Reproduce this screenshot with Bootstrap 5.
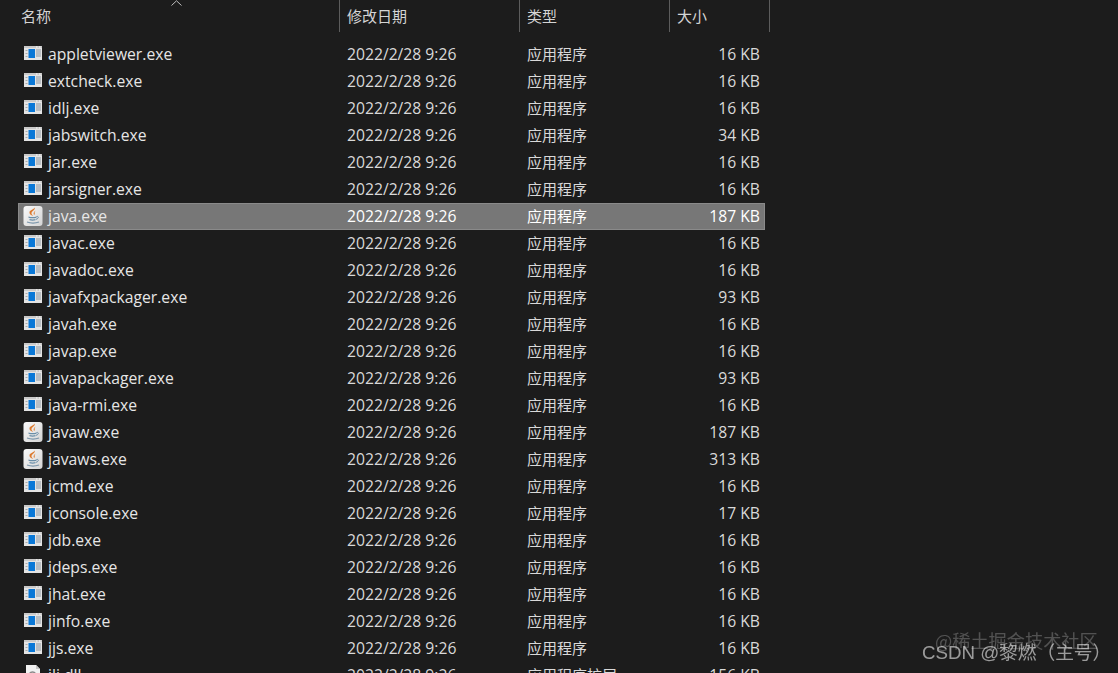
<!DOCTYPE html>
<html lang="zh">
<head>
<meta charset="utf-8">
<title>Explorer</title>
<link href="https://cdn.jsdelivr.net/npm/bootstrap@5.3.0/dist/css/bootstrap.min.css" rel="stylesheet">
<style>
html,body{height:673px;overflow:hidden;background:#1c1c1c;}
body{font-family:"Open Sans","Noto Sans CJK SC",sans-serif;font-size:15.7px;color:#d9d9d9;position:relative;}
.hdr{height:32px;width:770px;}
.hcell{height:32px;border-right:1px solid #5c5c5c;padding-left:7px;line-height:32px;font-size:15px;color:#d4d4d4;font-family:"Noto Sans CJK SC",sans-serif;position:relative;}
.c1{width:340px;flex:none;}
.c2{width:180px;flex:none;}
.c3{width:150px;flex:none;}
.c4{width:100px;flex:none;}
.hcell.c1{padding-left:21px;}
.chev{position:absolute;left:171px;top:0;}
.flist{padding:9px 0 0 18px;}
.frow{height:27px;width:747px;line-height:26px;white-space:nowrap;}
.frow.sel{background:#777;box-shadow:inset 0 0 0 1px #8a8a8a;color:#fff;}
.fname{width:322px;height:26px;flex:none;padding-left:5px;gap:5px;color:#e6e6e6;}
.fdate{width:180px;flex:none;padding-left:7px;}
.ftype{width:136px;flex:none;padding-left:7px;font-family:"Noto Sans CJK SC",sans-serif;font-size:15px;line-height:25px;}
.fsize{width:104px;flex:none;text-align:right;}
.ico{width:20px;height:20px;flex:none;display:block;}
.mark-a,.mark-b{position:absolute;white-space:nowrap;font-family:"Noto Sans CJK SC",sans-serif;filter:blur(.6px);}
.mark-a{left:935px;top:627px;font-size:18.2px;color:rgba(255,255,255,.24);}
.mark-b{left:922px;top:639px;font-size:18.7px;color:rgba(255,255,255,.56);font-family:"Liberation Sans","Noto Sans CJK SC",sans-serif;}
</style>
</head>
<body>
<svg width="0" height="0" class="position-absolute">
<defs>
<linearGradient id="javbg" x1="0" y1="0" x2="1" y2="1"><stop offset="0" stop-color="#fafafa"/><stop offset="1" stop-color="#d4d4d4"/></linearGradient>
<symbol id="exe" viewBox="0 0 20 20">
<rect x="1" y="2" width="18" height="14" fill="#e4e4e4"/>
<rect x="1" y="2" width="18" height="2" fill="#c9c9c9"/>
<rect x="13" y="2.500" width="1.500" height="1" fill="#fff"/><rect x="16" y="2.500" width="1.500" height="1" fill="#fff"/>
<rect x="5.500" y="5" width="6.500" height="9" fill="#0a78d7"/>
<rect x="2.500" y="6" width="2" height="1" fill="#a9a9a9"/><rect x="2.500" y="9" width="2" height="1" fill="#a9a9a9"/><rect x="2.500" y="12" width="2" height="1" fill="#a9a9a9"/>
<path d="M13 6h5M13 8h5M13 10h5M13 12h5" stroke="#8f99a3" stroke-width="1"/>
</symbol>
<symbol id="jav" viewBox="0 0 20 20">
<rect x=".5" y="0" width="19" height="20" rx="3" fill="url(#javbg)"/>
<path d="M11.500 1.500c1.500 2.500-3.500 3.500-3 6 .2 1 1 1.500 1.500 2.500-2-.7-4-2-3.500-4 .5-2 4.500-2.500 5-4.500z" fill="#dd7a2e"/>
<path d="M13 4.500c-2 1.200-3 2-2 4.500 1-.5.800-1.500.600-2.300-.1-.8.600-1.400 1.400-2.200z" fill="#dd7a2e"/>
<path d="M5.500 10.500c2 .7 6 .7 8 0v1.200c-2 .7-6 .7-8 0zM6.500 13c1.800.6 4.500.6 6 0v1.200c-1.500.6-4.500.6-6 0z" fill="#6a8ea8"/>
<path d="M13.500 10.500c2.500-.7 2.500 2.200-.5 2.800" stroke="#6a8ea8" fill="none"/>
<path d="M4 16c3.500 1.300 8.500 1.300 12 0" stroke="#7a95aa" stroke-width="1.200" fill="none"/>
</symbol>
<symbol id="dll" viewBox="0 0 20 20">
<path d="M3 0h10l4 4v16H3z" fill="#f2f2f2"/>
<path d="M13 0v4h4" fill="#c8c8c8"/>
<circle cx="9.500" cy="10" r="3" fill="none" stroke="#8a8a8a" stroke-width="1.500"/>
</symbol>
</defs>
</svg>

<div class="hdr d-flex">
  <div class="hcell c1">名称<svg class="chev" width="11" height="6" viewBox="0 0 11 6"><path d="M.5 5.500 5.500 .8l5 4.700" fill="none" stroke="#bdbdbd"/></svg></div>
  <div class="hcell c2">修改日期</div>
  <div class="hcell c3">类型</div>
  <div class="hcell c4">大小</div>
</div>

<div class="flist">
<div class="frow d-flex"><div class="fname d-flex align-items-center"><svg class="ico"><use href="#exe"/></svg><span>appletviewer.exe</span></div><div class="fdate">2022/2/28 9:26</div><div class="ftype">应用程序</div><div class="fsize">16 KB</div></div>
<div class="frow d-flex"><div class="fname d-flex align-items-center"><svg class="ico"><use href="#exe"/></svg><span>extcheck.exe</span></div><div class="fdate">2022/2/28 9:26</div><div class="ftype">应用程序</div><div class="fsize">16 KB</div></div>
<div class="frow d-flex"><div class="fname d-flex align-items-center"><svg class="ico"><use href="#exe"/></svg><span>idlj.exe</span></div><div class="fdate">2022/2/28 9:26</div><div class="ftype">应用程序</div><div class="fsize">16 KB</div></div>
<div class="frow d-flex"><div class="fname d-flex align-items-center"><svg class="ico"><use href="#exe"/></svg><span>jabswitch.exe</span></div><div class="fdate">2022/2/28 9:26</div><div class="ftype">应用程序</div><div class="fsize">34 KB</div></div>
<div class="frow d-flex"><div class="fname d-flex align-items-center"><svg class="ico"><use href="#exe"/></svg><span>jar.exe</span></div><div class="fdate">2022/2/28 9:26</div><div class="ftype">应用程序</div><div class="fsize">16 KB</div></div>
<div class="frow d-flex"><div class="fname d-flex align-items-center"><svg class="ico"><use href="#exe"/></svg><span>jarsigner.exe</span></div><div class="fdate">2022/2/28 9:26</div><div class="ftype">应用程序</div><div class="fsize">16 KB</div></div>
<div class="frow sel d-flex"><div class="fname d-flex align-items-center"><svg class="ico"><use href="#jav"/></svg><span>java.exe</span></div><div class="fdate">2022/2/28 9:26</div><div class="ftype">应用程序</div><div class="fsize">187 KB</div></div>
<div class="frow d-flex"><div class="fname d-flex align-items-center"><svg class="ico"><use href="#exe"/></svg><span>javac.exe</span></div><div class="fdate">2022/2/28 9:26</div><div class="ftype">应用程序</div><div class="fsize">16 KB</div></div>
<div class="frow d-flex"><div class="fname d-flex align-items-center"><svg class="ico"><use href="#exe"/></svg><span>javadoc.exe</span></div><div class="fdate">2022/2/28 9:26</div><div class="ftype">应用程序</div><div class="fsize">16 KB</div></div>
<div class="frow d-flex"><div class="fname d-flex align-items-center"><svg class="ico"><use href="#exe"/></svg><span>javafxpackager.exe</span></div><div class="fdate">2022/2/28 9:26</div><div class="ftype">应用程序</div><div class="fsize">93 KB</div></div>
<div class="frow d-flex"><div class="fname d-flex align-items-center"><svg class="ico"><use href="#exe"/></svg><span>javah.exe</span></div><div class="fdate">2022/2/28 9:26</div><div class="ftype">应用程序</div><div class="fsize">16 KB</div></div>
<div class="frow d-flex"><div class="fname d-flex align-items-center"><svg class="ico"><use href="#exe"/></svg><span>javap.exe</span></div><div class="fdate">2022/2/28 9:26</div><div class="ftype">应用程序</div><div class="fsize">16 KB</div></div>
<div class="frow d-flex"><div class="fname d-flex align-items-center"><svg class="ico"><use href="#exe"/></svg><span>javapackager.exe</span></div><div class="fdate">2022/2/28 9:26</div><div class="ftype">应用程序</div><div class="fsize">93 KB</div></div>
<div class="frow d-flex"><div class="fname d-flex align-items-center"><svg class="ico"><use href="#exe"/></svg><span>java-rmi.exe</span></div><div class="fdate">2022/2/28 9:26</div><div class="ftype">应用程序</div><div class="fsize">16 KB</div></div>
<div class="frow d-flex"><div class="fname d-flex align-items-center"><svg class="ico"><use href="#jav"/></svg><span>javaw.exe</span></div><div class="fdate">2022/2/28 9:26</div><div class="ftype">应用程序</div><div class="fsize">187 KB</div></div>
<div class="frow d-flex"><div class="fname d-flex align-items-center"><svg class="ico"><use href="#jav"/></svg><span>javaws.exe</span></div><div class="fdate">2022/2/28 9:26</div><div class="ftype">应用程序</div><div class="fsize">313 KB</div></div>
<div class="frow d-flex"><div class="fname d-flex align-items-center"><svg class="ico"><use href="#exe"/></svg><span>jcmd.exe</span></div><div class="fdate">2022/2/28 9:26</div><div class="ftype">应用程序</div><div class="fsize">16 KB</div></div>
<div class="frow d-flex"><div class="fname d-flex align-items-center"><svg class="ico"><use href="#exe"/></svg><span>jconsole.exe</span></div><div class="fdate">2022/2/28 9:26</div><div class="ftype">应用程序</div><div class="fsize">17 KB</div></div>
<div class="frow d-flex"><div class="fname d-flex align-items-center"><svg class="ico"><use href="#exe"/></svg><span>jdb.exe</span></div><div class="fdate">2022/2/28 9:26</div><div class="ftype">应用程序</div><div class="fsize">16 KB</div></div>
<div class="frow d-flex"><div class="fname d-flex align-items-center"><svg class="ico"><use href="#exe"/></svg><span>jdeps.exe</span></div><div class="fdate">2022/2/28 9:26</div><div class="ftype">应用程序</div><div class="fsize">16 KB</div></div>
<div class="frow d-flex"><div class="fname d-flex align-items-center"><svg class="ico"><use href="#exe"/></svg><span>jhat.exe</span></div><div class="fdate">2022/2/28 9:26</div><div class="ftype">应用程序</div><div class="fsize">16 KB</div></div>
<div class="frow d-flex"><div class="fname d-flex align-items-center"><svg class="ico"><use href="#exe"/></svg><span>jinfo.exe</span></div><div class="fdate">2022/2/28 9:26</div><div class="ftype">应用程序</div><div class="fsize">16 KB</div></div>
<div class="frow d-flex"><div class="fname d-flex align-items-center"><svg class="ico"><use href="#exe"/></svg><span>jjs.exe</span></div><div class="fdate">2022/2/28 9:26</div><div class="ftype">应用程序</div><div class="fsize">16 KB</div></div>
<div class="frow d-flex"><div class="fname d-flex align-items-center"><svg class="ico"><use href="#dll"/></svg><span>jli.dll</span></div><div class="fdate">2022/2/28 9:26</div><div class="ftype">应用程序扩展</div><div class="fsize">156 KB</div></div>
</div>

<div class="mark-a">@稀土掘金技术社区</div>
<div class="mark-b">CSDN @黎燃（主号）</div>
</body>
</html>
